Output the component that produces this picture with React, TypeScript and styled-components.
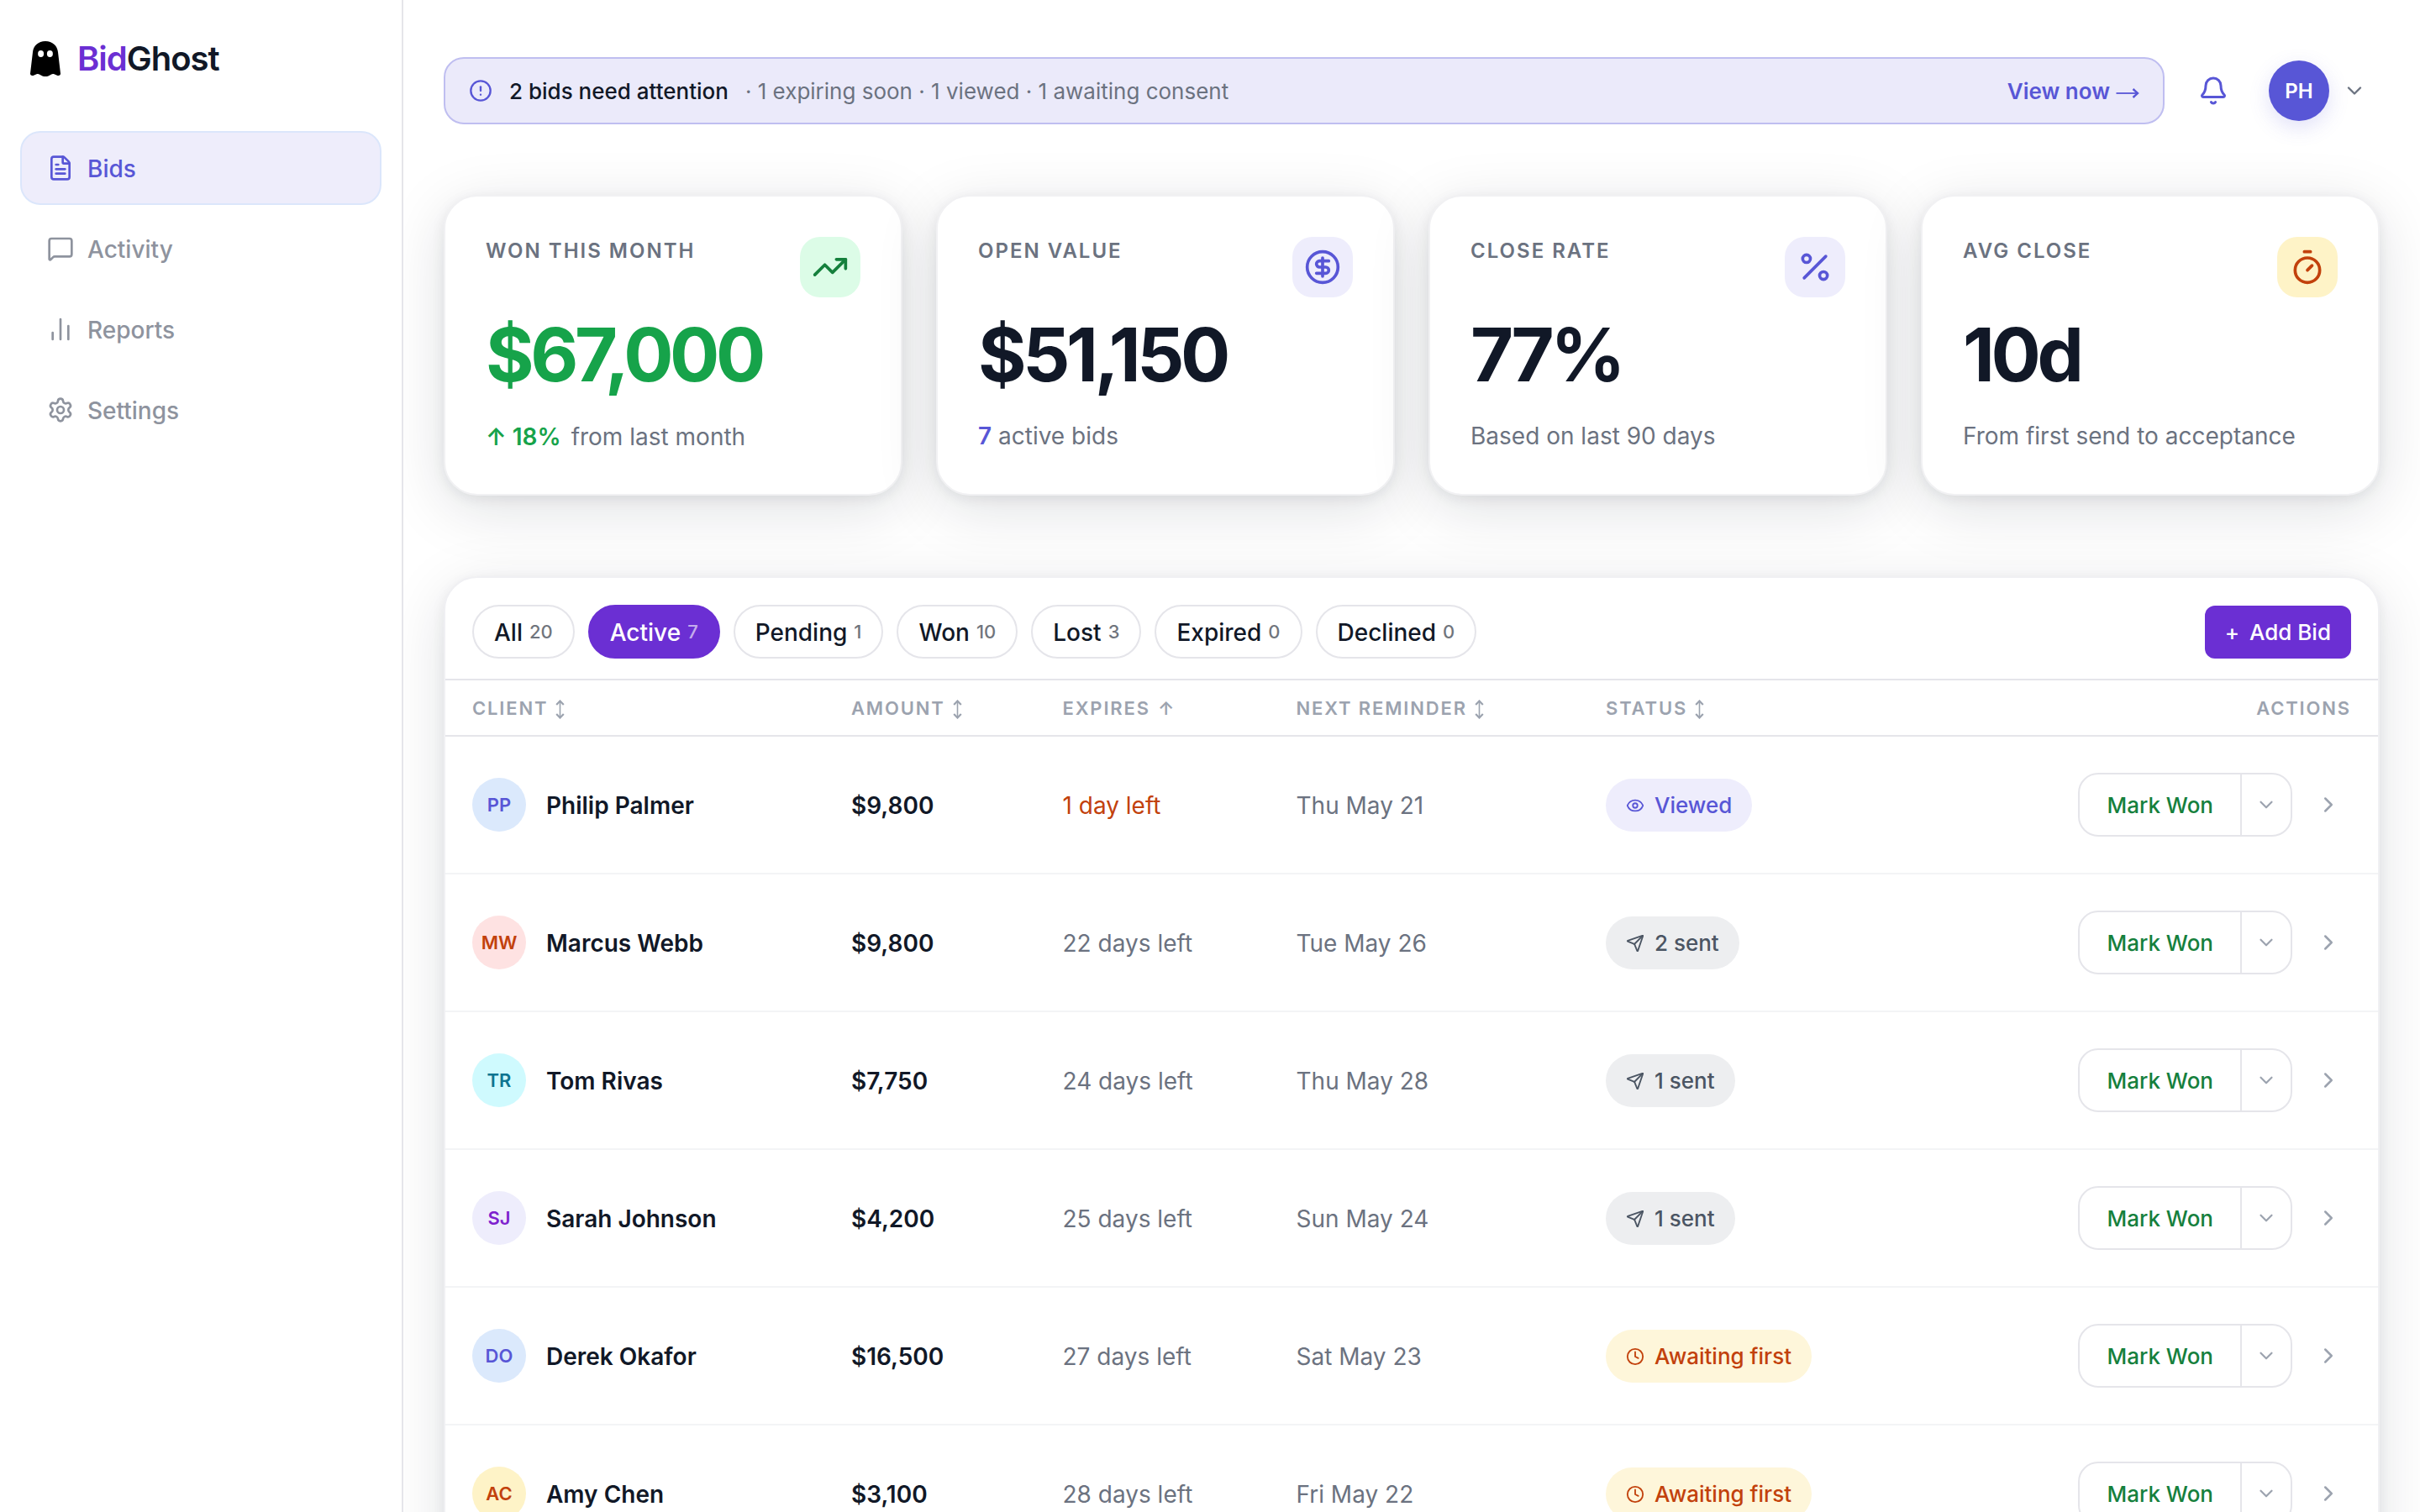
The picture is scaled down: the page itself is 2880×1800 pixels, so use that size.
import * as React from 'react';
import styled, { createGlobalStyle } from 'styled-components';
import {
  Bell,
  ChartNoAxesColumn,
  ChevronDown,
  ChevronRight,
  CircleAlert,
  CircleDollarSign,
  Clock,
  Eye,
  FileText,
  MessageSquare,
  Percent,
  Send,
  Settings,
  Timer,
  TrendingUp,
} from 'lucide-react';

const GlobalStyle = createGlobalStyle`
  * {
    box-sizing: border-box;
  }

  body {
    margin: 0;
    overflow: hidden;
    background: #fff;
    color: #111827;
    font-family: Inter, 'Liberation Sans', sans-serif;
    font-size: 28px;
    -webkit-font-smoothing: antialiased;
  }

  button {
    margin: 0;
    padding: 0;
    border: 0;
    background: none;
    color: inherit;
    font: inherit;
  }

  svg {
    display: block;
    flex: none;
  }
`;

const Shell = styled.div`
  display: flex;
  height: 1800px;
  overflow: hidden;
`;

const Sidebar = styled.aside`
  position: relative;
  z-index: 1;
  flex: none;
  width: 480px;
  border-right: 2px solid #e5e5ea;
  padding: 48px 24px 0;
  background: #fff;
`;

const Brand = styled.div`
  display: flex;
  align-items: center;
  gap: 20px;
  height: 44px;
  padding-left: 12px;
`;

const BrandName = styled.span`
  padding-bottom: 2px;
  font-size: 40px;
  font-weight: 600;
  letter-spacing: -0.025em;
`;

const BrandAccent = styled.span`
  color: #6b2fd3;
`;

const Nav = styled.nav`
  display: flex;
  flex-direction: column;
  gap: 8px;
  margin-top: 64px;
`;

const NavItem = styled.a<{ $active?: boolean }>`
  display: flex;
  align-items: center;
  gap: 16px;
  height: 88px;
  padding-left: 30px;
  border: 2px solid ${({ $active }) => ($active ? '#dbe6fb' : 'transparent')};
  border-radius: 24px;
  background: ${({ $active }) => ($active ? '#eeedfb' : 'transparent')};
  color: ${({ $active }) => ($active ? '#5856d6' : '#8e939e')};
  font-weight: 500;
`;

const Label = styled.span`
  padding-top: 2px;
`;

const Main = styled.main`
  flex: 1;
  min-width: 0;
  padding: 68px 48px 0;
`;

const TopBar = styled.header`
  display: flex;
  align-items: center;
  height: 80px;
`;

const Banner = styled.div`
  display: flex;
  align-items: center;
  flex: 1;
  height: 80px;
  padding: 0 28px;
  border: 2px solid #bfbef0;
  border-radius: 24px;
  background: #ebeafa;
  font-size: 26px;
`;

const BannerTitle = styled.span`
  margin: 0 20px;
  font-weight: 500;
`;

const BannerText = styled.span`
  flex: 1;
  color: #6b7280;
`;

const BannerLink = styled.a`
  display: flex;
  align-items: center;
  gap: 7px;
  color: #5856d6;
  font-weight: 600;

  svg {
    margin-top: 5px;
  }
`;

const BellButton = styled.button`
  margin: 0 48px 0 40px;
  color: #5856d6;
`;

const UserMenu = styled.button`
  display: flex;
  align-items: center;
  gap: 16px;
  margin-right: 16px;
  color: #6b7280;
`;

const UserAvatar = styled.span`
  display: grid;
  place-items: center;
  width: 72px;
  height: 72px;
  border-radius: 50%;
  background: #5856d6;
  box-shadow: 0 8px 24px rgba(88, 86, 214, 0.18);
  color: #fff;
  font-size: 24px;
  font-weight: 600;
`;

const Stats = styled.section`
  display: grid;
  grid-template-columns: repeat(4, 1fr);
  gap: 40px;
  margin-top: 84px;
`;

const StatCard = styled.article`
  height: 358px;
  padding: 48px;
  border: 2px solid #f1f1f3;
  border-radius: 40px;
  background: #fff;
  box-shadow: 0 4px 16px rgba(17, 24, 39, 0.08), 0 16px 72px rgba(17, 24, 39, 0.13);
`;

const StatHead = styled.div`
  display: flex;
  justify-content: space-between;
  height: 72px;
`;

const StatLabel = styled.span`
  padding-top: 1px;
  color: #6b7280;
  font-size: 24px;
  font-weight: 600;
  line-height: 32px;
  letter-spacing: 2px;
`;

const StatIcon = styled.span<{ $bg: string; $color: string }>`
  display: grid;
  place-items: center;
  width: 72px;
  height: 72px;
  border-radius: 24px;
  background: ${({ $bg }) => $bg};
  color: ${({ $color }) => $color};
`;

const StatValue = styled.div<{ $color?: string }>`
  margin-top: 24px;
  color: ${({ $color }) => $color || '#111827'};
  font-size: 88px;
  font-weight: 700;
  line-height: 88px;
  letter-spacing: -0.05em;
`;

const StatNote = styled.div`
  display: flex;
  align-items: center;
  margin-top: 36px;
  color: #6b7280;
  line-height: 34px;
  white-space: pre;
`;

const TrendNote = styled.span`
  padding-top: 1px;
`;

const Trend = styled.span`
  margin-right: 12px;
  color: #16a34a;
  font-weight: 600;
`;

const Highlight = styled.span`
  color: #5856d6;
  font-weight: 600;
`;

const Panel = styled.section`
  height: 1300px;
  margin-top: 96px;
  border: 2px solid #f0f0f3;
  border-radius: 40px;
  background: #fff;
  box-shadow: 0 4px 16px rgba(17, 24, 39, 0.07), 0 16px 72px rgba(17, 24, 39, 0.12);
`;

const Toolbar = styled.div`
  display: flex;
  align-items: center;
  justify-content: space-between;
  height: 122px;
  padding: 32px 32px 24px;
  border-bottom: 2px solid #e5e5ea;
`;

const Filters = styled.div`
  display: flex;
  gap: 16px;
`;

const FilterPill = styled.button<{ $active?: boolean }>`
  display: flex;
  align-items: center;
  gap: 8px;
  height: 64px;
  padding: 0 24px;
  border: 2px solid ${({ $active }) => ($active ? '#6b2fd3' : '#e5e5ea')};
  border-radius: 32px;
  background: ${({ $active }) => ($active ? '#6b2fd3' : '#fff')};
  color: ${({ $active }) => ($active ? '#fff' : '#111827')};
  font-weight: 500;
`;

const FilterCount = styled.span`
  font-size: 22px;
  opacity: 0.6;
`;

const AddButton = styled.button`
  display: flex;
  align-items: center;
  gap: 12px;
  height: 63px;
  margin-top: 1px;
  padding: 0 24px;
  border-radius: 12px;
  background: #6b2fd3;
  color: #fff;
  font-size: 26px;
  font-weight: 500;
`;

const Row = styled.div`
  display: grid;
  grid-template-columns: 451px 251.5px 278px 368.5px 1fr;
  align-items: center;
  height: 164px;
  padding: 0 32px;
  border-bottom: 2px solid #f3f4f6;
`;

const HeadRow = styled(Row)`
  height: 67px;
  border-bottom-color: #e5e5ea;
  color: #9ca3af;
  font-size: 22px;
  font-weight: 600;
  letter-spacing: 1.85px;
`;

const HeadCell = styled.span`
  display: flex;
  align-items: center;
  gap: 9px;

  svg {
    margin-top: 3px;
  }
`;

const Client = styled.div`
  display: flex;
  align-items: center;
  gap: 24px;
  font-weight: 600;
`;

const Initials = styled.span<{ $bg: string; $color: string }>`
  display: grid;
  place-items: center;
  width: 64px;
  height: 64px;
  border-radius: 50%;
  background: ${({ $bg }) => $bg};
  color: ${({ $color }) => $color};
  font-size: 22px;
`;

const Amount = styled.span`
  padding-top: 2px;
  font-weight: 600;
`;

const Muted = styled.span<{ $urgent?: boolean }>`
  padding-top: 2px;
  color: ${({ $urgent }) => ($urgent ? '#c2410c' : '#6b7280')};
`;

const LastCell = styled.div`
  display: flex;
  align-items: center;
  justify-content: space-between;
`;

const Status = styled.span<{ $bg: string; $color: string }>`
  display: flex;
  align-items: center;
  gap: 12px;
  height: 63px;
  margin-top: 1px;
  padding: 0 24px;
  border-radius: 32px;
  background: ${({ $bg }) => $bg};
  color: ${({ $color }) => $color};
  font-size: 26px;
  font-weight: 500;
`;

const Actions = styled.div`
  display: flex;
  align-items: center;
  gap: 28px;
  padding-right: 12px;
  color: #9ca3af;
`;

const SplitButton = styled.div`
  display: flex;
  height: 76px;
  border: 2px solid #e5e5ea;
  border-radius: 24px;
`;

const MarkWon = styled.button`
  padding: 1px 32px 0;
  color: #15803d;
  font-size: 26px;
  font-weight: 500;
`;

const MoreButton = styled.button`
  display: grid;
  place-items: center;
  width: 60px;
  border-left: 2px solid #e5e5ea;
`;

const GhostLogo = () => (
  <svg width="36" height="42" viewBox="0 0 36 42">
    <path
      d="M18 0C9.500 0 3.800 5.500 3 13L0 38.500C-.2 40.600 1.700 41.500 3.500 40.900L7.500 39.200C8.800 38.700 10 38.800 11.200 39.700L14.500 41.400C16.500 42.200 19.500 42.200 21.500 41.400L24.800 39.700C26 38.800 27.200 38.700 28.500 39.200L32.500 40.900C34.300 41.500 36.200 40.600 36 38.500L33 13C32.200 5.500 26.500 0 18 0Z"
      fill="#000"
    />
    <ellipse cx="12.600" cy="15" rx="3.500" ry="4" fill="#fff" />
    <ellipse cx="23.400" cy="15" rx="3.500" ry="4" fill="#fff" />
  </svg>
);

const LongArrow = () => (
  <svg width="28" height="12" viewBox="0 0 28 12" fill="none" stroke="currentColor">
    <path d="M0.500 6H26" strokeWidth="1.800" />
    <path d="M20.500 1L26 6L20.500 11" strokeWidth="2.400" />
  </svg>
);

const SortArrows = () => (
  <svg width="11" height="23" viewBox="0 0 11 23" fill="none" stroke="currentColor">
    <path d="M5.500 2V21" strokeWidth="1.600" />
    <path d="M1.200 6L5.500 1.500L9.800 6M1.200 17L5.500 21.500L9.800 17" strokeWidth="2.200" />
  </svg>
);

const navItems = [
  { label: 'Bids', icon: FileText, active: true },
  { label: 'Activity', icon: MessageSquare },
  { label: 'Reports', icon: ChartNoAxesColumn },
  { label: 'Settings', icon: Settings },
];

const stats = [
  {
    label: 'WON THIS MONTH',
    value: '$67,000',
    valueColor: '#16a34a',
    icon: TrendingUp,
    bg: '#dcfce7',
    color: '#15803d',
    note: (
      <TrendNote>
        <Trend>↑ 18%</Trend>from last month
      </TrendNote>
    ),
  },
  {
    label: 'OPEN VALUE',
    value: '$51,150',
    icon: CircleDollarSign,
    bg: '#eeedfc',
    color: '#5856d6',
    note: (
      <>
        <Highlight>7</Highlight> active bids
      </>
    ),
  },
  {
    label: 'CLOSE RATE',
    value: '77%',
    icon: Percent,
    bg: '#eeedfc',
    color: '#5856d6',
    note: 'Based on last 90 days',
  },
  {
    label: 'AVG CLOSE',
    value: '10d',
    icon: Timer,
    bg: '#fef3c7',
    color: '#c2410c',
    note: 'From first send to acceptance',
  },
];

const filters = [
  { label: 'All', count: 20 },
  { label: 'Active', count: 7 },
  { label: 'Pending', count: 1 },
  { label: 'Won', count: 10 },
  { label: 'Lost', count: 3 },
  { label: 'Expired', count: 0 },
  { label: 'Declined', count: 0 },
];

const statusKinds = {
  viewed: { icon: Eye, bg: '#eeedfc', color: '#5856d6' },
  sent: { icon: Send, bg: '#edeef0', color: '#4b5563' },
  awaiting: { icon: Clock, bg: '#fef6da', color: '#c2410c' },
};

interface Bid {
  initials: string;
  name: string;
  bg: string;
  color: string;
  amount: string;
  expires: string;
  reminder: string;
  kind: keyof typeof statusKinds;
  status: string;
  urgent?: boolean;
}

const bids: Bid[] = [
  { initials: 'PP', name: 'Philip Palmer', bg: '#dbe9fc', color: '#5856d6', amount: '$9,800', expires: '1 day left', reminder: 'Thu May 21', kind: 'viewed', status: 'Viewed', urgent: true },
  { initials: 'MW', name: 'Marcus Webb', bg: '#fee2e2', color: '#c2410c', amount: '$9,800', expires: '22 days left', reminder: 'Tue May 26', kind: 'sent', status: '2 sent' },
  { initials: 'TR', name: 'Tom Rivas', bg: '#cffafe', color: '#0e7490', amount: '$7,750', expires: '24 days left', reminder: 'Thu May 28', kind: 'sent', status: '1 sent' },
  { initials: 'SJ', name: 'Sarah Johnson', bg: '#eeedfc', color: '#7e22ce', amount: '$4,200', expires: '25 days left', reminder: 'Sun May 24', kind: 'sent', status: '1 sent' },
  { initials: 'DO', name: 'Derek Okafor', bg: '#dbe9fc', color: '#5856d6', amount: '$16,500', expires: '27 days left', reminder: 'Sat May 23', kind: 'awaiting', status: 'Awaiting first' },
  { initials: 'AC', name: 'Amy Chen', bg: '#fef3c7', color: '#c2410c', amount: '$3,100', expires: '28 days left', reminder: 'Fri May 22', kind: 'awaiting', status: 'Awaiting first' },
];

const SortHead: React.FC<{ children: React.ReactNode }> = ({ children }) => (
  <HeadCell>
    {children}
    <SortArrows />
  </HeadCell>
);

const BidRow: React.FC<{ bid: Bid }> = ({ bid }) => {
  const { icon: Icon, bg, color } = statusKinds[bid.kind];
  return (
    <Row>
      <Client>
        <Initials $bg={bid.bg} $color={bid.color}>
          {bid.initials}
        </Initials>
        <Label>{bid.name}</Label>
      </Client>
      <Amount>{bid.amount}</Amount>
      <Muted $urgent={bid.urgent}>{bid.expires}</Muted>
      <Muted>{bid.reminder}</Muted>
      <LastCell>
        <Status $bg={bg} $color={color}>
          <Icon size={22} />
          {bid.status}
        </Status>
        <Actions>
          <SplitButton>
            <MarkWon>Mark Won</MarkWon>
            <MoreButton>
              <ChevronDown size={26} />
            </MoreButton>
          </SplitButton>
          <ChevronRight size={30} />
        </Actions>
      </LastCell>
    </Row>
  );
};

const App: React.FC = () => (
  <>
    <GlobalStyle />
    <Shell>
      <Sidebar>
        <Brand>
          <GhostLogo />
          <BrandName>
            <BrandAccent>Bid</BrandAccent>Ghost
          </BrandName>
        </Brand>
        <Nav>
          {navItems.map(({ label, icon: Icon, active }) => (
            <NavItem key={label} $active={active}>
              <Icon size={32} />
              <Label>{label}</Label>
            </NavItem>
          ))}
        </Nav>
      </Sidebar>
      <Main>
        <TopBar>
          <Banner>
            <CircleAlert size={28} color="#5856d6" />
            <BannerTitle>2 bids need attention</BannerTitle>
            <BannerText>· 1 expiring soon · 1 viewed · 1 awaiting consent</BannerText>
            <BannerLink>
              View now
              <LongArrow />
            </BannerLink>
          </Banner>
          <BellButton>
            <Bell size={36} />
          </BellButton>
          <UserMenu>
            <UserAvatar>PH</UserAvatar>
            <ChevronDown size={28} />
          </UserMenu>
        </TopBar>
        <Stats>
          {stats.map(({ label, value, valueColor, icon: Icon, bg, color, note }) => (
            <StatCard key={label}>
              <StatHead>
                <StatLabel>{label}</StatLabel>
                <StatIcon $bg={bg} $color={color}>
                  <Icon size={44} />
                </StatIcon>
              </StatHead>
              <StatValue $color={valueColor}>{value}</StatValue>
              <StatNote>{note}</StatNote>
            </StatCard>
          ))}
        </Stats>
        <Panel>
          <Toolbar>
            <Filters>
              {filters.map(({ label, count }) => (
                <FilterPill key={label} $active={label === 'Active'}>
                  <Label>{label}</Label>
                  <FilterCount>{count}</FilterCount>
                </FilterPill>
              ))}
            </Filters>
            <AddButton>
              <span>+</span>
              <span>Add Bid</span>
            </AddButton>
          </Toolbar>
          <HeadRow>
            <SortHead>CLIENT</SortHead>
            <SortHead>AMOUNT</SortHead>
            <HeadCell>
              EXPIRES <span>↑</span>
            </HeadCell>
            <SortHead>NEXT REMINDER</SortHead>
            <LastCell>
              <SortHead>STATUS</SortHead>
              <span>ACTIONS</span>
            </LastCell>
          </HeadRow>
          {bids.map((bid) => (
            <BidRow key={bid.name} bid={bid} />
          ))}
        </Panel>
      </Main>
    </Shell>
  </>
);

export default App;
